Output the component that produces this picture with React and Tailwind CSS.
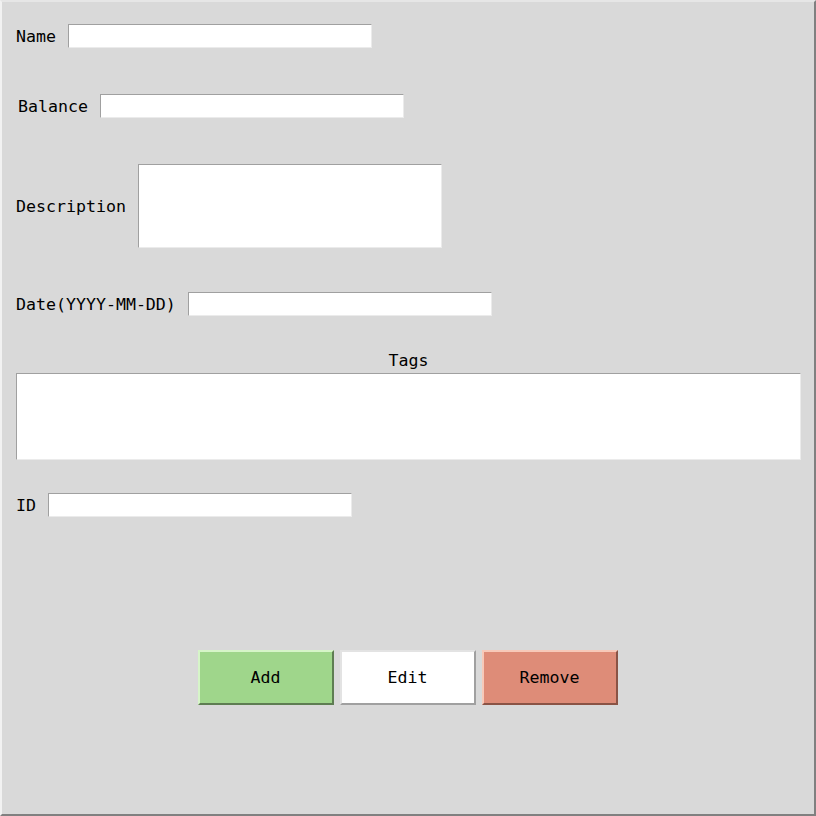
import React from "react";

const entryCls =
  "bg-white border border-t-[#a0a0a0] border-l-[#a0a0a0] border-b-[#ebebeb] border-r-[#ebebeb] outline-none";

const Field = ({ label, className = "", boxClass = "h-[24px]", multiline }) => (
  <div className={`flex items-center ${className}`}>
    <span className="whitespace-pre leading-none pt-[2px]">{label}</span>
    {multiline ? (
      <textarea className={`ml-[12px] w-[304px] resize-none ${entryCls} ${boxClass}`} />
    ) : (
      <input className={`ml-[12px] w-[304px] ${entryCls} ${boxClass}`} />
    )}
  </div>
);

const Button = ({ children, className }) => (
  <button className={`w-[136px] h-[55px] border-2 flex items-center justify-center pt-[2px] ${className}`}>
    {children}
  </button>
);

export default function App() {
  return (
    <div className="w-[816px] h-[816px] bg-[#d9d9d9] border-2 border-t-[#e6e6e6] border-l-[#f2f2f2] border-r-[#808080] border-b-[#808080] font-['DejaVu_Sans_Mono',monospace] text-[16.6px] text-black">
      <div className="flex flex-col pl-[14px] pt-[22px]">
        <Field label="Name" />
        <Field label="Balance" className="mt-[46px] ml-[2px]" />
        <Field label="Description" className="mt-[46px]" boxClass="h-[84px]" multiline />
        <Field label="Date(YYYY-MM-DD)" className="mt-[44px]" />

        <div className="mt-[34px] h-[20px] w-[785px] flex items-center justify-center leading-none pt-[2px]">
          Tags
        </div>
        <textarea className={`mt-[3px] w-[785px] h-[87px] resize-none ${entryCls}`} />

        <Field label="ID" className="mt-[33px]" />

        <div className="mt-[133px] flex justify-center gap-[6px] w-[785px] pr-[2px]">
          <Button className="bg-[#9fd68b] border-t-[#d6f5c8] border-l-[#d6f5c8] border-b-[#5e7d52] border-r-[#5e7d52]">
            Add
          </Button>
          <Button className="bg-white border-t-[#e3e3e3] border-l-[#e3e3e3] border-b-[#a0a0a0] border-r-[#a0a0a0]">
            Edit
          </Button>
          <Button className="bg-[#de8c78] border-t-[#f7c9b9] border-l-[#f7c9b9] border-b-[#8a5345] border-r-[#8a5345]">
            Remove
          </Button>
        </div>
      </div>
    </div>
  );
}
